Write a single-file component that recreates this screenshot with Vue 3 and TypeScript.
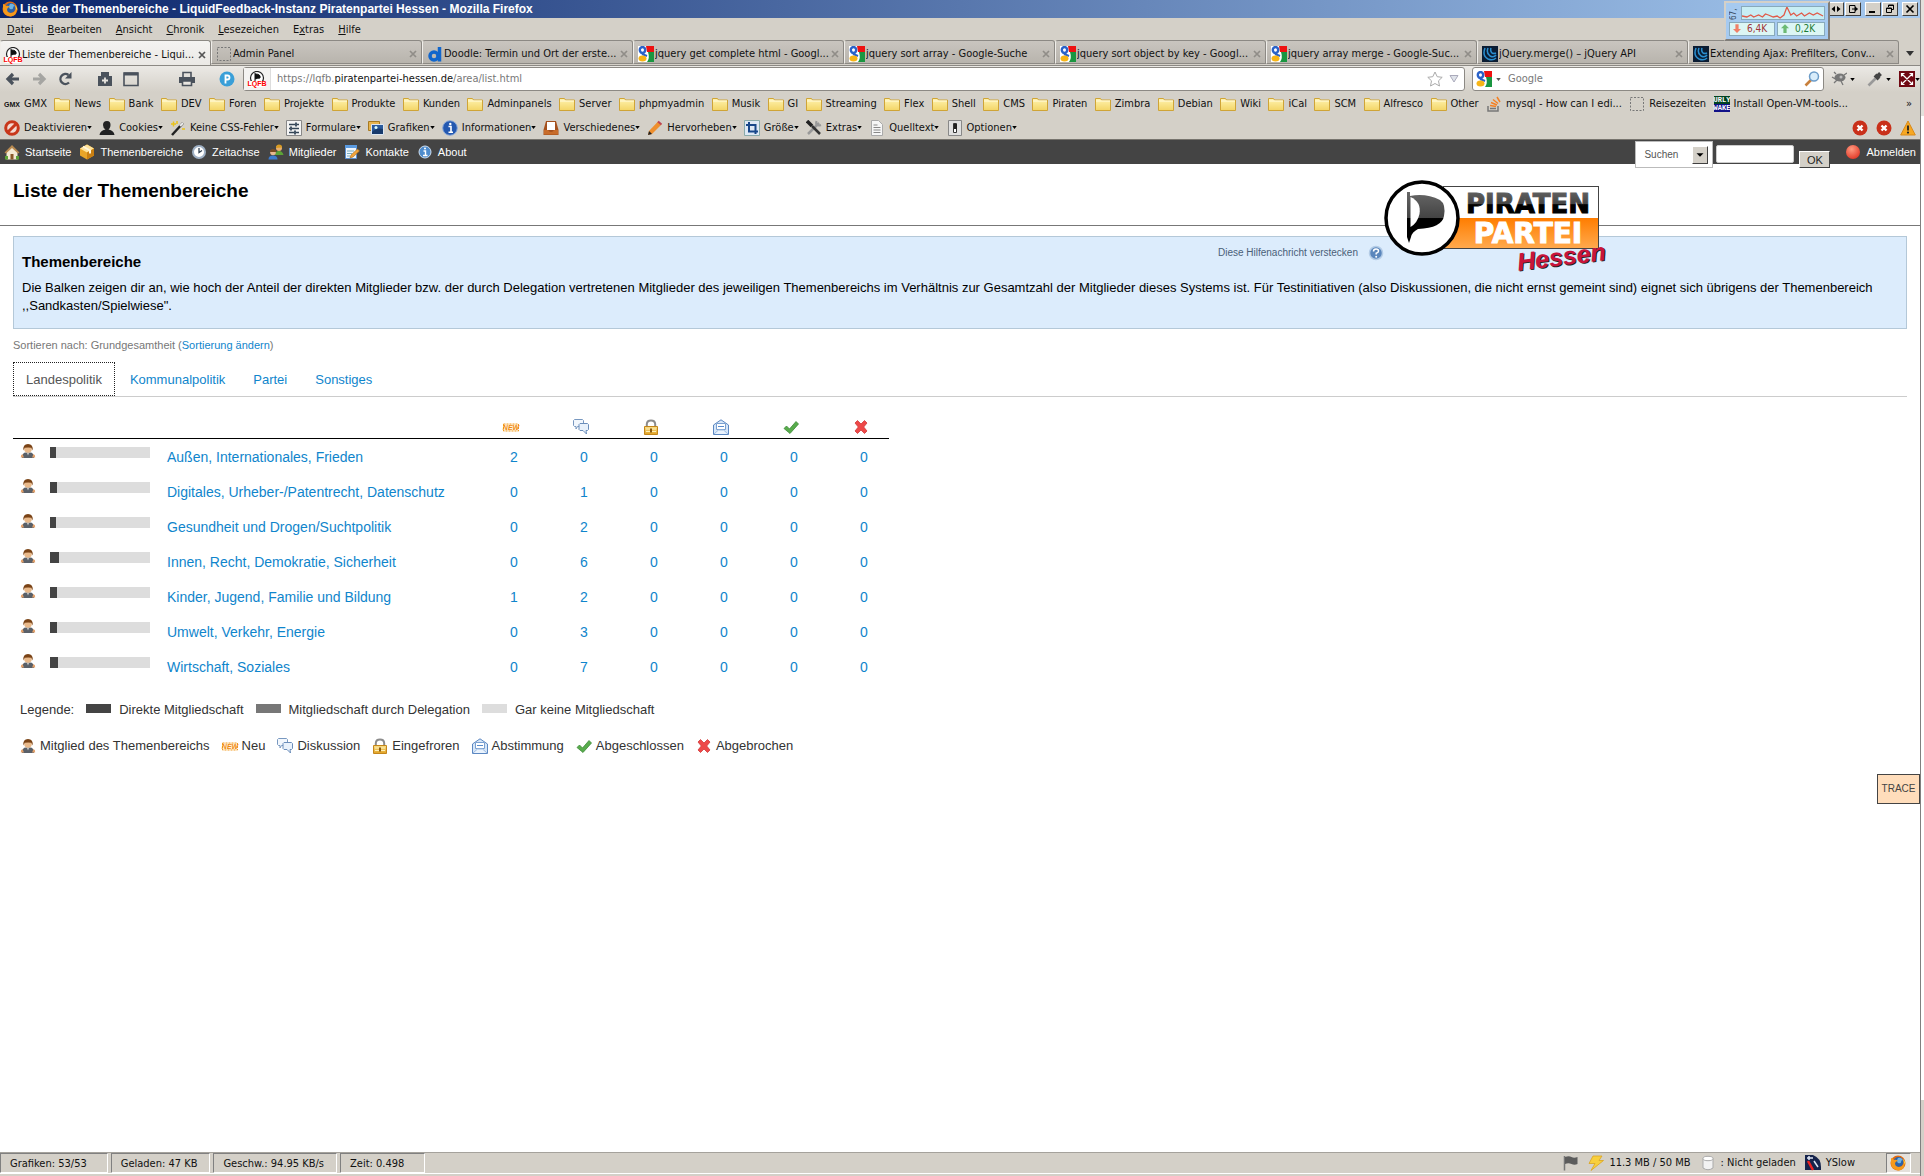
<script setup lang="ts">
import { h, ref } from 'vue'

interface Item { label: string; icon: string }
interface Area { name: string; direct: number; counts: number[] }
interface Caption { text: string; y: number; fill: string; style?: string; family?: string }

/* Favicons and badges that carry lettering on top of their symbol. */
const captions: Record<string, Caption[]> = {
  lqfb: [{ text: 'LQFB', y: 15, fill: '#f00' }],
  gmx: [{ text: 'GMX', y: 11, fill: '#111' }],
  new: [{ text: 'NEW', y: 11, fill: '#f08a10', style: 'italic' }],
  wake: [
    { text: 'URLY', y: 6, fill: '#fff', family: 'Liberation Mono' },
    { text: 'WAKE', y: 14, fill: '#fff', family: 'Liberation Mono' },
  ],
}

const Icon = (props: { name: string }) =>
  h('svg', { class: 'icon', viewBox: '0 0 16 16' }, [
    h('use', { href: '#i-' + props.name }),
    ...(captions[props.name] ?? []).map((c) =>
      h('text', {
        x: 8, y: c.y, fill: c.fill, 'font-size': 7, 'font-weight': 'bold', 'font-style': c.style,
        'font-family': c.family ?? 'Liberation Sans', 'text-anchor': 'middle',
      }, c.text)),
  ])
Icon.props = ['name']

const menu: [string, string, string][] = [
  ['', 'D', 'atei'], ['', 'B', 'earbeiten'], ['', 'A', 'nsicht'], ['', 'C', 'hronik'],
  ['', 'L', 'esezeichen'], ['E', 'x', 'tras'], ['', 'H', 'ilfe'],
]

const tabs: Item[] = [
  { label: 'Liste der Themenbereiche - Liqui...', icon: 'lqfb' },
  { label: 'Admin Panel', icon: 'blank' },
  { label: 'Doodle: Termin und Ort der erste...', icon: 'doodle' },
  { label: 'jquery get complete html - Googl...', icon: 'google' },
  { label: 'jquery sort array - Google-Suche', icon: 'google' },
  { label: 'jquery sort object by key - Googl...', icon: 'google' },
  { label: 'jquery array merge - Google-Suc...', icon: 'google' },
  { label: 'jQuery.merge() – jQuery API', icon: 'jquery' },
  { label: 'Extending Ajax: Prefilters, Conv...', icon: 'jquery' },
]

const folders = ['News', 'Bank', 'DEV', 'Foren', 'Projekte', 'Produkte', 'Kunden', 'Adminpanels', 'Server',
  'phpmyadmin', 'Musik', 'GI', 'Streaming', 'Flex', 'Shell', 'CMS', 'Piraten', 'Zimbra', 'Debian', 'Wiki',
  'iCal', 'SCM', 'Alfresco', 'Other']

const bookmarks: Item[] = [
  { label: 'GMX', icon: 'gmx' },
  ...folders.map((label) => ({ label, icon: 'folder' })),
  { label: 'mysql - How can I edi...', icon: 'stack' },
  { label: 'Reisezeiten', icon: 'blank' },
  { label: 'Install Open-VM-tools...', icon: 'wake' },
]

const devTools: Item[] = [
  { label: 'Deaktivieren', icon: 'forbid' },
  { label: 'Cookies', icon: 'person' },
  { label: 'Keine CSS-Fehler', icon: 'wand' },
  { label: 'Formulare', icon: 'form' },
  { label: 'Grafiken', icon: 'images' },
  { label: 'Informationen', icon: 'info' },
  { label: 'Verschiedenes', icon: 'tray' },
  { label: 'Hervorheben', icon: 'pencil' },
  { label: 'Größe', icon: 'crop' },
  { label: 'Extras', icon: 'tools' },
  { label: 'Quelltext', icon: 'doc' },
  { label: 'Optionen', icon: 'switch' },
]

const siteNav: Item[] = [
  { label: 'Startseite', icon: 'house' },
  { label: 'Themenbereiche', icon: 'box' },
  { label: 'Zeitachse', icon: 'clock' },
  { label: 'Mitglieder', icon: 'group' },
  { label: 'Kontakte', icon: 'note' },
  { label: 'About', icon: 'about' },
]

const sections = ['Landespolitik', 'Kommunalpolitik', 'Partei', 'Sonstiges']
const activeSection = ref('Landespolitik')

const states: Item[] = [
  { label: 'Neu', icon: 'new' },
  { label: 'Diskussion', icon: 'talk' },
  { label: 'Eingefroren', icon: 'lock' },
  { label: 'Abstimmung', icon: 'mail' },
  { label: 'Abgeschlossen', icon: 'tick' },
  { label: 'Abgebrochen', icon: 'cross' },
]

const areas: Area[] = [
  { name: 'Außen, Internationales, Frieden', direct: 6, counts: [2, 0, 0, 0, 0, 0] },
  { name: 'Digitales, Urheber-/Patentrecht, Datenschutz', direct: 7, counts: [0, 1, 0, 0, 0, 0] },
  { name: 'Gesundheit und Drogen/Suchtpolitik', direct: 6, counts: [0, 2, 0, 0, 0, 0] },
  { name: 'Innen, Recht, Demokratie, Sicherheit', direct: 9, counts: [0, 6, 0, 0, 0, 0] },
  { name: 'Kinder, Jugend, Familie und Bildung', direct: 7, counts: [1, 2, 0, 0, 0, 0] },
  { name: 'Umwelt, Verkehr, Energie', direct: 7, counts: [0, 3, 0, 0, 0, 0] },
  { name: 'Wirtschaft, Soziales', direct: 8, counts: [0, 7, 0, 0, 0, 0] },
]

const status = ['Grafiken: 53/53', 'Geladen: 47 KB', 'Geschw.: 94.95 KB/s', 'Zeit: 0.498']
const windowButtons: Item[] = [
  { label: 'Verschieben', icon: 'w-move' },
  { label: 'Senden', icon: 'w-send' },
  { label: 'Minimieren', icon: 'w-min' },
  { label: 'Wiederherstellen', icon: 'w-restore' },
  { label: 'Schließen', icon: 'w-close' },
]
const webQuery = ref('')
const siteQuery = ref('')
</script>

<template>
  <svg class="defs" aria-hidden="true">
    <defs>
      <linearGradient id="g-folder" x1="0" y1="0" x2="0" y2="1"><stop offset="0" stop-color="#fff3b0" /><stop offset="1" stop-color="#f3d566" /></linearGradient>
      <linearGradient id="g-lock" x1="0" y1="0" x2="0" y2="1"><stop offset="0" stop-color="#fbe08a" /><stop offset="1" stop-color="#e0a020" /></linearGradient>
      <radialGradient id="g-red" cx=".4" cy=".3" r=".8"><stop offset="0" stop-color="#ff9a80" /><stop offset="1" stop-color="#e03020" /></radialGradient>
      <linearGradient id="g-black" x1="0" y1="0" x2="0" y2="1"><stop offset="0" stop-color="#666" /><stop offset=".5" stop-color="#444" /><stop offset=".52" stop-color="#000" /><stop offset="1" stop-color="#000" /></linearGradient>
      <linearGradient id="g-orange" x1="0" y1="0" x2="0" y2="1"><stop offset="0" stop-color="#ff7d00" /><stop offset="1" stop-color="#ffa94d" /></linearGradient>
    </defs>
    <symbol id="i-firefox" viewBox="0 0 16 16"><circle cx="8" cy="8" r="7.5" fill="#e06a10" /><circle cx="8.5" cy="7" r="5" fill="#2c62a8" /><path d="M8 3q3-1 5 2-2 0-2 2t-3 1q-2-2 0-5" fill="#6fb4e4" /><path d="M1 3q2 0 3 2 2-1 4 1-2 0-3 2 0 4 4 4 4 0 5-5 2 7-5 8.500Q1 15 1 8q0-3 0-5" fill="#f59a1c" /><path d="M13 4q3 3 2 6 0-1-1-2" fill="#ffd23c" /></symbol>
    <symbol id="i-lqfb" viewBox="0 0 16 16"><circle cx="8" cy="7" r="6.500" fill="#fff" stroke="#222" stroke-width="1.200" /><path d="M6 2v8M6 3q6 0 5 4-2 0-5 1" fill="#111" stroke="#111" /><path d="M0 10h16v6H0z" fill="#fff" /></symbol>
    <symbol id="i-blank" viewBox="0 0 16 16"><rect x="1.500" y="1.500" width="13" height="13" fill="none" stroke="#777" stroke-dasharray="2 1.500" /></symbol>
    <symbol id="i-doodle" viewBox="0 0 16 16"><circle cx="7" cy="10" r="4" fill="none" stroke="#1166cc" stroke-width="3.500" /><path d="M12.500 1v14.500" stroke="#1166cc" stroke-width="3.500" /></symbol>
    <symbol id="i-google" viewBox="0 0 16 16"><path fill="#fff" d="M0 0h16v16H0z" /><path fill="#e11" d="M8 0h8v6H9z" /><path fill="#1a9641" d="M10 6h6v10H9q3-4 1-10" /><ellipse cx="4.500" cy="4" rx="2.700" ry="3" fill="none" stroke="#2a62c8" stroke-width="2.400" /><path d="M4 8l5 2" stroke="#2a62c8" stroke-width="2" /><ellipse cx="4.500" cy="12.500" rx="4" ry="3" fill="#f7b516" /></symbol>
    <symbol id="i-jquery" viewBox="0 0 16 16"><path fill="#0a1c33" d="M0 0h16v16H0z" /><path d="M3 2q-3 8 3 11 5 2 8-1M6 2q-2 5 2 8 4 2 6-1M9 2q-1 3 1 5 2 1 4 0" fill="none" stroke="#2b8fd0" stroke-width="1.500" /></symbol>
    <symbol id="i-folder" viewBox="0 0 16 16"><path d="M.5 14.500v-12h5l1 1.500h9v10.500z" fill="url(#g-folder)" stroke="#cfa437" /><path d="M1 5h14" stroke="#fffbe0" /></symbol>
    <symbol id="i-stack" viewBox="0 0 16 16"><path d="M2 10v5h10v-5" fill="none" stroke="#777" stroke-width="1.500" /><path d="M4 12.500h6" stroke="#777" stroke-width="1.500" /><path d="M4 9.500l6 1M5 6.500l6 2.500M7 3.500l5 4M11 1l3 5" stroke="#f48024" stroke-width="1.500" /></symbol>
    <symbol id="i-wake" viewBox="0 0 16 16"><path fill="#042" d="M0 0h16v8H0z" /><path fill="#118" d="M0 8h16v8H0z" /></symbol>
    <symbol id="i-forbid" viewBox="0 0 16 16"><circle cx="8" cy="8" r="6.300" fill="#f3d9d2" stroke="#c8371b" stroke-width="3" /><path d="M12.500 3.500l-9 9" stroke="#c8371b" stroke-width="3" /></symbol>
    <symbol id="i-person" viewBox="0 0 16 16"><path d="M8 1c5 0 4 7 1.500 8.500Q15 10.500 15.500 15H.5Q1 10.500 6.500 9.500 4 8 4 5q0-4 4-4" fill="#222" /></symbol>
    <symbol id="i-wand" viewBox="0 0 16 16"><path d="M2 15L13 3" stroke="#222" stroke-width="2.500" /><path d="M10 6l3-3" stroke="#eee" stroke-width="2" /><path d="M1 4h5M3.500 1.500v5M7 1v3M12 9h3" stroke="#e9c21b" stroke-width="1.500" /></symbol>
    <symbol id="i-form" viewBox="0 0 16 16"><path fill="#f4f4f4" stroke="#888" d="M.5.500h15v15H.5z" /><path d="M3 4.500h10M3 8.500h10M3 12.500h10" stroke="#345" stroke-width="1.500" /><path d="M9 2.500h2v4H9zM4 6.500h2v4H4zM8 10.500h2v4H8z" fill="#456" /></symbol>
    <symbol id="i-images" viewBox="0 0 16 16"><path fill="#e6b450" stroke="#a87a20" d="M.5 1.500h11v9H.5z" /><path fill="#2a5a9c" stroke="#dce6f0" d="M3.500 4.500h12v10h-12z" /><path d="M4 12q5-5 11-3v5H4z" fill="#173a6c" /><circle cx="8" cy="7.500" r="1.500" fill="#dff" /></symbol>
    <symbol id="i-info" viewBox="0 0 16 16"><circle cx="8" cy="8" r="7.300" fill="#2458b0" stroke="#8aa8d8" /><path d="M6.500 6.500H9V12M6.500 12.200h4.500" stroke="#fff" stroke-width="1.600" fill="none" /><circle cx="8.300" cy="4" r="1.200" fill="#fff" /></symbol>
    <symbol id="i-about" viewBox="0 0 16 16"><circle cx="8" cy="8" r="6" fill="#4f8ccc" stroke="#cfe0f2" /><path d="M6.500 7H8.500v4M6 11.500h4.500" stroke="#fff" stroke-width="1.400" fill="none" /><circle cx="8" cy="4.500" r="1" fill="#fff" /></symbol>
    <symbol id="i-tray" viewBox="0 0 16 16"><path d="M3 1h10l2.500 9v5H.5v-5z" fill="#a5501c" /><path d="M4 2h8v8H4z" fill="#fff" /><path d="M1 10h4q1 2 3 2t3-2h4v4.500H1z" fill="#c86c2a" /></symbol>
    <symbol id="i-pencil" viewBox="0 0 16 16"><path d="M1 15l1-4L11 1.500l3.500 3L5 14z" fill="#ee8f2e" /><path d="M1 15l1-4 3 3z" fill="#222" /><path d="M11 1.500l3.500 3" stroke="#b45" stroke-width="2" /></symbol>
    <symbol id="i-crop" viewBox="0 0 16 16"><path fill="#dde8f4" stroke="#8aa" d="M.5.500h15v15H.5z" /><path d="M5 2v9.500h9M2 5h9.500v9" fill="none" stroke="#17478a" stroke-width="2" /></symbol>
    <symbol id="i-tools" viewBox="0 0 16 16"><path d="M2 14L13 3" stroke="#999" stroke-width="2.500" /><path d="M10.500 1q-1 3 .5 4t4 0" fill="none" stroke="#999" stroke-width="2" /><path d="M1 1l5 5" stroke="#222" stroke-width="3.500" /><path d="M6 6l8 8" stroke="#333" stroke-width="2.500" /></symbol>
    <symbol id="i-doc" viewBox="0 0 16 16"><path d="M2.500.500h7l4 4v11h-11z" fill="#f6f6f6" stroke="#aaa" /><path d="M4.500 5h4M4.500 7.500h7M4.500 10h7M4.500 12.500h7" stroke="#888" /></symbol>
    <symbol id="i-switch" viewBox="0 0 16 16"><path fill="#e0e0e0" stroke="#888" d="M1.500.500h13v15h-13z" /><path fill="#fff" stroke="#333" d="M6.500 3.500h3v9h-3z" /><path fill="#222" d="M7 4h3v5H7z" /></symbol>
    <symbol id="i-house" viewBox="0 0 16 16"><path d="M2.500 8v7.500h11V8L8 3z" fill="#f4ead2" /><path d="M8 1L.500 8.500l1.500 1L8 4l6 5.500 1.500-1z" fill="#b98a50" /><path d="M6.500 10h3v5.500h-3z" fill="#8a5a28" /><path d="M1 12h3v3.500H1zM12 12h3v3.500h-3z" fill="#5ca336" /></symbol>
    <symbol id="i-box" viewBox="0 0 16 16"><path d="M8 .5l7 4v7l-7 4-7-4v-7z" fill="#e8a528" /><path d="M8 .5l7 4-7 4-7-4z" fill="#ffe39a" /><path d="M8 8.500v7l7-4v-7z" fill="#c97f12" /><path d="M4 2.500l7 4v3" fill="none" stroke="#fff6dc" stroke-width="2" /></symbol>
    <symbol id="i-clock" viewBox="0 0 16 16"><circle cx="8" cy="8" r="6" fill="#fff" stroke="#9fb0c4" stroke-width="2" /><path d="M8 4v4.500l3-2" fill="none" stroke="#345" stroke-width="1.300" /></symbol>
    <symbol id="i-group" viewBox="0 0 16 16"><circle cx="11" cy="4" r="3" fill="#e8b070" /><path d="M8 4q0-3.500 3-3.500t3 3" fill="#d89a20" /><path d="M6.500 11q1-4 4.500-4t4.500 4z" fill="#5ca336" /><circle cx="5" cy="8.500" r="2.800" fill="#e8b890" /><path d="M2 8q0-3 3-3t3 3" fill="#7a4a20" /><path d="M.5 15.500Q.500 11.500 5 11.500t4.500 4z" fill="#3c7cd0" /></symbol>
    <symbol id="i-note" viewBox="0 0 16 16"><path d="M1.500 1.500h11v13h-11z" fill="#eef5fd" stroke="#5a8fd0" /><path d="M1 1h12v3H1z" fill="#5a9ae0" /><path d="M3 7h7M3 9.500h5M3 12h3" stroke="#7ab" /><path d="M6 14l1-3 6.500-6 2 2L9 13z" fill="#f0a43c" stroke="#a66a18" stroke-width=".6" /></symbol>
    <symbol id="i-help" viewBox="0 0 16 16"><circle cx="8" cy="8" r="6.500" fill="#5a86bc" stroke="#b4cce6" stroke-width="1.500" /><path d="M5.500 6.500q0-2.500 2.500-2.500t2.500 2q0 1.500-2.300 2.300v1.200" fill="none" stroke="#fff" stroke-width="1.500" /><circle cx="8.200" cy="11.700" r="1" fill="#fff" /></symbol>
    <symbol id="i-stop" viewBox="0 0 16 16"><circle cx="8" cy="8" r="7" fill="url(#g-red)" /></symbol>
    <symbol id="i-member" viewBox="0 0 16 16"><path d="M2 15q0-5.500 4-5.500h4q4 0 4 5.500z" fill="#5a6068" /><path d="M.8 14.500q-.3-3 1.700-3.500L4 14.500zM15.200 14.500q.3-3-1.700-3.500L12 14.500z" fill="#e2a06a" /><circle cx="8" cy="6" r="3.800" fill="#e9b98a" /><path d="M3.500 7.500Q2.500 1 8 1t4.500 6.500l-1.200-2.700q-3-.8-6.600 0z" fill="#7a4316" /><path d="M7 10h2l-1 2.500z" fill="#ccc" /></symbol>
    <symbol id="i-new" viewBox="0 0 16 16"><path d="M.5 5h15v7H.5z" fill="#fff3dc" stroke="#f39a1f" stroke-width="1" stroke-dasharray="2 1" /></symbol>
    <symbol id="i-talk" viewBox="0 0 16 16"><path d="M1.500.500h8l1 1v5l-1 1H4.500L3 10V7.500H1.500l-1-1v-5z" fill="#f2f7fd" stroke="#7898c0" /><path d="M7 4.500h7.500l1 1v5l-1 1H13l.5 3.500-3.500-3.500H7l-1-1v-5z" fill="#e8f1fb" stroke="#6a8dba" /></symbol>
    <symbol id="i-lock" viewBox="0 0 16 16"><path d="M3.800 8V5Q4 1.500 8 1.500T12.200 5v3" fill="none" stroke="#8c8c8c" stroke-width="2" /><path d="M1.500 7.500h13v8h-13z" fill="url(#g-lock)" stroke="#c4861a" /><path d="M3 10h10M3 12.500h10" stroke="#fdf0b8" /><path d="M7 9.500h2v4H7z" fill="#8a5a10" /></symbol>
    <symbol id="i-mail" viewBox="0 0 16 16"><path d="M.5 6L8 .8 15.500 6v9.500H.500z" fill="#d6e6f8" stroke="#5c88c2" /><path d="M3.500 4.500h9v6h-9z" fill="#fff" stroke="#7aa0d0" /><path d="M5 7.500h6" stroke="#5a8ccc" /><path d="M1 15l4.500-4h5l4.500 4" fill="#eaf3fd" stroke="#9dbbe0" /></symbol>
    <symbol id="i-tick" viewBox="0 0 16 16"><path d="M1 9.500L3.500 7l3 3L13 2.500 15.500 5 7 14.500z" fill="#58ac4c" stroke="#3d8a38" stroke-width=".8" /></symbol>
    <symbol id="i-cross" viewBox="0 0 16 16"><path d="M2 4l2.500-2.500L8 5l3.500-3.500L14 4l-3.300 4L14 12l-2.500 2.500L8 11l-3.500 3.500L2 12l3.300-4z" fill="#ee4848" stroke="#d03a3a" stroke-width=".8" /></symbol>
    <symbol id="i-back" viewBox="0 0 16 16"><path d="M8 3L3 8l5 5M3 8h11" fill="none" stroke="currentColor" stroke-width="3.200" /></symbol>
    <symbol id="i-forward" viewBox="0 0 16 16"><path d="M8 3l5 5-5 5M13 8H2" fill="none" stroke="currentColor" stroke-width="3.200" /></symbol>
    <symbol id="i-reload" viewBox="0 0 16 16"><path d="M12 11.500A5 5 0 1 1 11.500 4" fill="none" stroke="currentColor" stroke-width="2.400" /><path d="M14.500 1v6.500H8z" fill="currentColor" /></symbol>
    <symbol id="i-newtab" viewBox="0 0 16 16"><path d="M4 5V1h8v4h3v10H1V5z" fill="currentColor" /><path d="M8 6.500v6M5 9.500h6" stroke="#e8e5e0" stroke-width="1.800" /></symbol>
    <symbol id="i-newwin" viewBox="0 0 16 16"><path d="M1 2h14v12.500H1z" fill="none" stroke="currentColor" stroke-width="1.600" /><path d="M1 3h14" stroke="currentColor" stroke-width="3" /></symbol>
    <symbol id="i-print" viewBox="0 0 16 16"><path d="M4 6V1.500h8V6" fill="none" stroke="currentColor" stroke-width="1.600" /><path d="M0 6h16v6H0z" fill="currentColor" /><path d="M3.500 10h9v4.500h-9z" fill="#e8e5e0" stroke="currentColor" stroke-width="1.600" /></symbol>
    <symbol id="i-p" viewBox="0 0 16 16"><circle cx="8" cy="8" r="7.500" fill="#3a9fd8" /><path d="M6.500 12.500v-8h2q2 0 2 2t-2 2h-2" fill="none" stroke="#fff" stroke-width="1.800" /></symbol>
    <symbol id="i-star" viewBox="0 0 16 16"><path d="M8 1l2.200 4.700 5 .6-3.700 3.500 1 5.200L8 12.500 3.500 15l1-5.200L.800 6.300l5-.6z" fill="#fff" stroke="#aaa" /></symbol>
    <symbol id="i-loupe" viewBox="0 0 16 16"><path d="M1.500 14.500L7 9" stroke="#c8803c" stroke-width="2.600" /><circle cx="10" cy="5.500" r="4.500" fill="#d8ecfa" stroke="#6c9cc8" stroke-width="1.500" /></symbol>
    <symbol id="i-bug" viewBox="0 0 16 16"><ellipse cx="9" cy="6.500" rx="5.500" ry="4" fill="#777" /><path d="M1 6l5 3M3 12l4-4M10 10l2 4M5 3L3 1M13 4l3-2" stroke="#777" stroke-width="1.300" /><circle cx="10" cy="6" r="1.500" fill="#bbb" /></symbol>
    <symbol id="i-dropper" viewBox="0 0 16 16"><path d="M1.500 14.500l7-7" stroke="#999" stroke-width="2.600" /><path d="M8 4l4 4M9.500 6.500l4-4" stroke="#444" stroke-width="4" /></symbol>
    <symbol id="i-expand" viewBox="0 0 16 16"><path fill="#700812" d="M0 0h16v16H0z" /><path d="M2.500 2.500l11 11M13.500 2.500l-11 11M2.500 5.500v-3h3M10.500 2.500h3v3M2.500 10.500v3h3M10.500 13.500h3v-3" fill="none" stroke="#fff" stroke-width="1.200" /></symbol>
    <symbol id="i-error" viewBox="0 0 16 16"><circle cx="8" cy="8" r="7.500" fill="#c9301a" /><path d="M5.500 5.500l5 5M10.500 5.500l-5 5" stroke="#fff" stroke-width="2.400" /></symbol>
    <symbol id="i-warn" viewBox="0 0 16 16"><path d="M8 1l7.300 14H.700z" fill="#f7a823" stroke="#d98a1a" /><path d="M8 5.500v5" stroke="#222" stroke-width="1.800" /><circle cx="8" cy="12.600" r="1.100" fill="#222" /></symbol>
    <symbol id="i-flag" viewBox="0 0 16 16"><path d="M1.500 1v14.500" stroke="#777" stroke-width="1.500" /><path d="M2 2q4-1.500 6.500 0t6 0v7q-3 1.500-6 0T2 9z" fill="#5c5c5c" /></symbol>
    <symbol id="i-bolt" viewBox="0 0 16 16"><path d="M5 1h9l-3 4.500h4.500L3 15.500l4-7H1z" fill="#f8cf3c" stroke="#dba520" stroke-width=".8" /></symbol>
    <symbol id="i-db" viewBox="0 0 16 16"><path d="M3 3.500v9.500q5 3.500 10 0V3.500" fill="#f2f2f2" stroke="#aaa" /><ellipse cx="8" cy="3.500" rx="5" ry="2.200" fill="#fff" stroke="#aaa" /></symbol>
    <symbol id="i-yslow" viewBox="0 0 16 16"><path d="M0 0h8q8 3 8 12v3H0z" fill="#16244c" /><path d="M2 3h6M4 1v4M9 6l4 6" stroke="#dfe6f5" stroke-width="1.500" /><path d="M3 6l5 9" stroke="#e22" stroke-width="2.500" /></symbol>
    <symbol id="i-w-move" viewBox="0 0 12 10"><path d="M5 2v6L1.500 5zM7 2v6l3.500-3z" /></symbol>
    <symbol id="i-w-send" viewBox="0 0 12 10"><path d="M8 3V1.500H2.500v7H8V7" fill="none" stroke="#000" /><path d="M5 5h5M8 3l2.500 2L8 7z" stroke="#000" /></symbol>
    <symbol id="i-w-min" viewBox="0 0 12 10"><path d="M2 7h6v2H2z" /></symbol>
    <symbol id="i-w-restore" viewBox="0 0 12 10"><path d="M4.500 3V1h5v4.500H8M2.500 4h5v4.500h-5zM2.500 4.500h5M4.500 1.500h5" fill="none" stroke="#000" /></symbol>
    <symbol id="i-w-close" viewBox="0 0 12 10"><path d="M2.500 1.500l7 7M9.500 1.500l-7 7" stroke="#000" stroke-width="1.700" /></symbol>
  </svg>

  <div class="desktop">
    <div class="window">
      <header class="titlebar">
        <Icon name="firefox" />
        <span class="title">Liste der Themenbereiche - LiquidFeedback-Instanz Piratenpartei Hessen - Mozilla Firefox</span>
        <div class="win-buttons">
          <button v-for="b in windowButtons" :key="b.icon" type="button" class="win-button" :class="b.icon" :aria-label="b.label">
            <svg><use :href="'#i-' + b.icon" /></svg>
          </button>
        </div>
      </header>

      <div class="netmeter">
        <span class="net-peak">67,</span>
        <svg class="net-graph" viewBox="0 0 84 12" preserveAspectRatio="none"><path d="M0 9l5 1 4-2 3 2 5-2 4 2 3-3 3 1 5 2 4-1 3 2 4-3 3-8 4 8 3-2 3 3 5-3 3 3 5-3 4 2 4-2 6 3" fill="none" stroke="#e05a48" stroke-width="1.300" /></svg>
        <span class="net-value down"><svg viewBox="0 0 10 12"><path d="M3 0h4v6h3l-5 5-5-5h3z" fill="#f08068" /></svg>6,4K</span>
        <span class="net-value up"><svg viewBox="0 0 10 12"><path d="M3 11h4V5h3L5 0 0 5h3z" fill="#6cba74" /></svg>0,2K</span>
      </div>

      <nav class="menubar">
        <button v-for="m in menu" :key="m[2]" type="button" class="plain">{{ m[0] }}<u>{{ m[1] }}</u>{{ m[2] }}</button>
      </nav>

      <div class="tabstrip">
        <div v-for="(t, i) in tabs" :key="t.label" class="tab" :class="{ current: i === 0 }">
          <Icon :name="t.icon" />
          <span class="tab-label">{{ t.label }}</span>
          <button type="button" class="plain tab-close" aria-label="Tab schließen">
            <svg viewBox="0 0 8 8"><path d="M1 1l6 6M7 1L1 7" stroke="currentColor" stroke-width="1.700" /></svg>
          </button>
        </div>
        <button type="button" class="plain tab-list" aria-label="Alle Tabs auflisten"><svg viewBox="0 0 8 5"><path d="M0 0h8L4 5z" fill="#333" /></svg></button>
      </div>

      <div class="navbar">
        <div class="nav-buttons">
          <button type="button" class="plain" aria-label="Zurück"><Icon name="back" /></button>
          <button type="button" class="plain faded" aria-label="Vor"><Icon name="forward" /></button>
          <button type="button" class="plain" aria-label="Neu laden"><Icon name="reload" /></button>
          <button type="button" class="plain spaced" aria-label="Neuer Tab"><Icon name="newtab" /></button>
          <button type="button" class="plain" aria-label="Neues Fenster"><Icon name="newwin" /></button>
          <button type="button" class="plain far" aria-label="Drucken"><Icon name="print" /></button>
          <button type="button" class="plain spaced" aria-label="Piraten"><Icon name="p" /></button>
        </div>
        <div class="urlbar">
          <span class="site"><Icon name="lqfb" /></span>
          <a class="url" href="#">https://lqfb.<b>piratenpartei-hessen.de</b>/area/list.html</a>
          <Icon name="star" />
          <svg class="tri" viewBox="0 0 10 8"><path d="M1 .5h8L5 7z" fill="#dfe3ea" stroke="#aab" /></svg>
        </div>
        <label class="searchbar">
          <Icon name="google" />
          <svg class="caret" viewBox="0 0 6 4"><path d="M0 0h6L3 4z" fill="#555" /></svg>
          <input v-model="webQuery" type="text" placeholder="Google" aria-label="Google-Suche">
          <Icon name="loupe" />
        </label>
        <div class="addons">
          <button v-for="a in ['bug', 'dropper', 'expand']" :key="a" type="button" class="plain addon" :aria-label="a">
            <Icon :name="a" /><svg class="caret" viewBox="0 0 6 4"><path d="M0 0h6L3 4z" /></svg>
          </button>
        </div>
      </div>

      <nav class="bookmarks">
        <div class="bookmark-list">
          <a v-for="b in bookmarks" :key="b.label" href="#" class="tool"><Icon :name="b.icon" />{{ b.label }}</a>
        </div>
        <button type="button" class="plain more">»</button>
      </nav>

      <div class="devbar">
        <div class="dev-list">
          <button v-for="d in devTools" :key="d.label" type="button" class="plain tool"><Icon :name="d.icon" /><span>{{ d.label }}<svg class="caret" viewBox="0 0 6 4"><path d="M0 0h6L3 4z" /></svg></span></button>
        </div>
        <div class="dev-state">
          <Icon name="error" />
          <Icon name="error" />
          <Icon name="warn" />
        </div>
      </div>

      <div class="page">
        <div class="sitebar">
          <nav class="site-nav">
            <a v-for="n in siteNav" :key="n.label" href="#"><Icon :name="n.icon" />{{ n.label }}</a>
          </nav>
          <form class="site-search" @submit.prevent>
            <span class="select-box">
              <select aria-label="Suchbereich"><option>Suchen</option></select>
              <svg class="select-arrow" viewBox="0 0 16 18"><path d="M4 7h8l-4 4z" /></svg>
            </span>
            <input v-model="siteQuery" type="text" aria-label="Suchbegriff">
            <button type="submit" class="ok">OK</button>
          </form>
          <a href="#" class="logout"><Icon name="stop" />Abmelden</a>
        </div>

        <h1>Liste der Themenbereiche</h1>

        <svg class="logo" viewBox="0 0 228 96" role="img" aria-label="Piratenpartei Hessen">
          <rect x="59.500" y="8.500" width="155" height="62" fill="#fff" stroke="#444" />
          <rect x="60" y="40" width="154" height="30" fill="url(#g-orange)" />
          <circle cx="38" cy="40" r="36" fill="#fff" stroke="#000" stroke-width="3.500" />
          <path d="M23 14h3v4q16-3 30 4 6 4 4 16-2 12-26 13-6 3-7 8l-2 6-2-6z" fill="url(#g-black)" />
          <path d="M26.500 19q11 5 9 17-2 9-9 13z" fill="#fff" />
          <text x="144" y="35" class="logo-text" fill="url(#g-black)" stroke="url(#g-black)" text-anchor="middle">PIRATEN</text>
          <text x="144" y="65" class="logo-text wide" fill="#fff" stroke="#fff" text-anchor="middle">PARTEI</text>
          <g transform="rotate(-7 180 80)" class="logo-state"><text x="134" y="88" fill="#222">Hessen</text><text x="133" y="87" fill="#c8143c">Hessen</text></g>
        </svg>

        <main>
          <section class="help">
            <a href="#" class="hide-help">Diese Hilfenachricht verstecken<Icon name="help" /></a>
            <h2>Themenbereiche</h2>
            <p>Die Balken zeigen dir an, wie hoch der Anteil der direkten Mitglieder bzw. der durch Delegation vertretenen Mitglieder des jeweiligen Themenbereichs im Verhältnis zur Gesamtzahl der Mitglieder dieses Systems ist. Für Testinitiativen (also Diskussionen, die nicht ernst gemeint sind) eignet sich übrigens der Themenbereich ,,Sandkasten/Spielwiese".</p>
          </section>

          <p class="sorting">Sortieren nach: Grundgesamtheit (<a href="#">Sortierung ändern</a>)</p>

          <nav class="sections">
            <a v-for="s in sections" :key="s" href="#" :class="{ active: s === activeSection }" @click.prevent="activeSection = s">{{ s }}</a>
          </nav>

          <table class="areas">
            <thead>
              <tr>
                <th class="c-member"></th>
                <th class="c-bar"></th>
                <th></th>
                <th v-for="s in states" :key="s.icon" class="c-num" :aria-label="s.label"><Icon :name="s.icon" /></th>
              </tr>
            </thead>
            <tbody>
              <tr v-for="a in areas" :key="a.name">
                <td class="c-member"><Icon name="member" /></td>
                <td class="c-bar"><div class="bar"><div class="bar-direct" :style="{ width: a.direct + '%' }"></div></div></td>
                <td><a href="#">{{ a.name }}</a></td>
                <td v-for="(c, i) in a.counts" :key="i" class="c-num"><a href="#">{{ c }}</a></td>
              </tr>
            </tbody>
          </table>

          <div class="legend bars">
            <span>Legende:</span>
            <span><i class="swatch direct"></i>Direkte Mitgliedschaft</span>
            <span><i class="swatch delegated"></i>Mitgliedschaft durch Delegation</span>
            <span><i class="swatch none"></i>Gar keine Mitgliedschaft</span>
          </div>
          <div class="legend">
            <span><Icon name="member" />Mitglied des Themenbereichs</span>
            <span v-for="s in states" :key="s.icon"><Icon :name="s.icon" />{{ s.label }}</span>
          </div>
        </main>

        <button type="button" class="trace">TRACE</button>
      </div>

      <footer class="statusbar">
        <span v-for="s in status" :key="s" class="panel">{{ s }}</span>
        <div class="status-right">
          <Icon name="flag" />
          <span><Icon name="bolt" />11.3 MB / 50 MB</span>
          <span><Icon name="db" />: Nicht geladen</span>
          <span><Icon name="yslow" />YSlow</span>
        </div>
        <button type="button" class="fox" aria-label="Firefox"><Icon name="firefox" /></button>
      </footer>
    </div>
    <div class="edge"><div class="edge-top"></div><div class="edge-middle"></div><div class="edge-bottom"></div></div>
  </div>
</template>

<style>
body { margin: 0; background: #fff; }
</style>

<style scoped>
* { box-sizing: border-box; }
.defs { position: absolute; width: 0; height: 0; }
.desktop { display: flex; min-height: 100vh; font: 11px/14px "DejaVu Sans Condensed", "DejaVu Sans", sans-serif; color: #111; }
.window { position: relative; flex: 1; min-width: 0; display: flex; flex-direction: column; background: #d4d0c8; }
.icon { width: 16px; height: 16px; flex: none; display: block; overflow: visible; }
.caret { width: 5px; height: 3px; flex: none; vertical-align: middle; }
a { color: inherit; text-decoration: none; }
.plain { font: inherit; color: inherit; background: none; border: 0; padding: 0; white-space: nowrap; }

.titlebar { display: flex; align-items: center; gap: 2px; height: 18px; padding: 0 2px; background: linear-gradient(90deg, #0a246a, #a6caf0); color: #fff; }
.title { flex: 1; font: bold 12px/16px "Liberation Sans", Arial, sans-serif; white-space: nowrap; overflow: hidden; }
.win-buttons { display: flex; gap: 1px; }
.win-button { width: 16px; height: 14px; padding: 0; border: 1px solid; border-color: #fff #404040 #404040 #fff; background: #d4d0c8; display: flex; align-items: center; justify-content: center; }
.win-button svg { width: 12px; height: 10px; }
.w-min, .w-close { margin-left: 3px; }

.netmeter { position: absolute; top: 1px; right: 90px; width: 106px; height: 40px; padding: 3px; display: grid; grid-template-columns: 10px 34px 1fr; grid-template-rows: 14px 14px; gap: 2px; background: #a6caf0; border: 2px outset #d4d0c8; }
.net-peak { font-size: 8px; line-height: 10px; writing-mode: vertical-rl; transform: rotate(180deg); color: #345; }
.net-graph { grid-column: 2 / 4; width: 100%; height: 14px; background: #c8eef4; border: 1px solid #8ab; }
.net-value { display: flex; align-items: center; gap: 6px; padding: 0 3px; background: #dcf6f4; border: 1px solid #8ab; font-size: 10px; line-height: 12px; }
.net-value svg { width: 8px; height: 10px; }
.down { grid-column: 1 / 3; color: #a03434; }
.up { color: #1c7a34; }

.menubar { display: flex; align-items: center; gap: 14px; height: 22px; padding: 2px 7px 0; }

.tabstrip { display: flex; height: 26px; border-bottom: 1px solid #8c8984; }
.tab { flex: 1 1 0; min-width: 0; display: flex; align-items: center; gap: 1px; padding: 3px 4px 0 4px; margin-bottom: 1px; background: linear-gradient(#c9c5bf, #b8b4ad); border: 1px solid #8c8984; border-left-color: #f0eeea; border-radius: 3px 3px 0 0; }
.tab.current { background: linear-gradient(#f4f3f1, #ebe9e5); border-bottom: 0; margin-bottom: 0; }
.tab-label { flex: 1; white-space: nowrap; overflow: hidden; }
.tab-close { color: #908d88; }
.current .tab-close { color: #555; }
.tab-close svg { width: 8px; height: 8px; display: block; }
.tab-list { width: 21px; }
.tab-list svg { width: 8px; height: 5px; }

.navbar { display: flex; align-items: center; gap: 7px; height: 26px; background: linear-gradient(#ebe9e5, #d4d0c8); }
.nav-buttons { display: flex; gap: 10px; padding: 0 1px 0 5px; color: #4a525c; }
.nav-buttons .spaced { margin-left: 14px; }
.nav-buttons .far { margin-left: 30px; }
.nav-buttons .faded { color: #a5a5a2; }
.urlbar, .searchbar { display: flex; align-items: center; height: 24px; background: #fff; border: 1px solid #8c8984; border-radius: 3px; }
.urlbar { flex: 1; min-width: 0; gap: 6px; padding-right: 5px; }
.site { height: 22px; padding: 3px 5px 0 5px; border-right: 1px solid #ddd; background: #f4f3f1; }
.url { flex: 1; color: #777; white-space: nowrap; overflow: hidden; }
.url b { font-weight: normal; color: #111; }
.tri { width: 10px; height: 8px; }
.searchbar { width: 352px; gap: 4px; padding: 0 3px; }
.searchbar input { flex: 1; min-width: 0; border: 0; padding: 0 3px; font: inherit; background: none; outline: none; }
.searchbar input::placeholder { color: #777; opacity: 1; }
.addons { display: flex; gap: 12px; }
.addon { display: flex; align-items: center; gap: 3px; }
.addon:last-child { gap: 0; margin-left: -4px; }

.bookmarks { display: flex; align-items: center; height: 24px; padding: 0 8px 0 4px; }
.bookmark-list { flex: 1; min-width: 0; display: flex; justify-content: space-between; }
.tool { display: flex; align-items: center; gap: 4px; white-space: nowrap; }
.more { width: 64px; text-align: right; }

.devbar { display: flex; align-items: center; justify-content: space-between; height: 24px; padding: 0 4px; border-bottom: 1px solid #77746e; }
.dev-list { flex: 0 1 1013px; display: flex; justify-content: space-between; }
.dev-state { display: flex; gap: 8px; }

.page { position: relative; flex: 1; background: #fff; font: 13px/18px "Liberation Sans", Arial, sans-serif; color: #333; }
.sitebar { display: flex; align-items: center; height: 24px; padding: 0 4px; background: #444; color: #fff; font-size: 11px; }
.site-nav { flex: 1; display: flex; gap: 8px; }
.site-nav a, .logout { display: flex; align-items: center; gap: 5px; }
.logout { margin-left: 15px; }
.site-search { display: flex; align-items: flex-start; gap: 3px; height: 22px; }
.select-box { display: flex; align-items: center; height: 27px; padding: 0 4px 0 8px; background: #fff; border: 1px solid #bbb; }
.select-box select { width: 48px; appearance: none; border: 0; padding: 0; background: none; font: 10px/14px "Liberation Sans", Arial, sans-serif; color: #555; }
.select-arrow { width: 16px; height: 18px; background: #d4d0c8; border: 1px solid; border-color: #fff #404040 #404040 #fff; }
.site-search input { width: 78px; height: 18px; margin-top: 4px; border: 1px solid #ccc; border-radius: 2px; background: #fff; }
.ok { width: 31px; height: 17px; margin: 10px 0 0 2px; padding: 0; font: 11px/14px "Liberation Sans", Arial, sans-serif; background: #d4d0c8; color: #222; border: 1px solid; border-color: #fff #404040 #404040 #fff; }

h1 { margin: 0; padding: 16px 13px 23px; border-bottom: 1px solid #777; font-size: 19px; line-height: 22px; color: #000; }
.logo { position: absolute; top: 38px; right: 308px; width: 228px; height: 96px; overflow: visible; }
.logo-text { font: bold 26px "DejaVu Sans", sans-serif; stroke-width: 1px; }
.logo-text.wide { font-size: 28px; }
.logo-state { font: italic bold 25px "Liberation Sans", Arial, sans-serif; }

main { padding: 10px 13px 0; }
.help { min-height: 93px; padding: 16px 8px 12px; background: #dcecfc; border: 1px solid #b4c8d8; color: #000; }
.hide-help { float: right; display: flex; align-items: center; gap: 10px; margin-right: 514px; font-size: 10px; line-height: 14px; color: #4a6078; margin-top: -8px; }
.help h2 { margin: 0 0 8px; font-size: 15px; line-height: 18px; }
.help p { margin: 0; }
.sorting { margin: 7px 0 8px; font-size: 11px; color: #777; }
.sorting a, .sections a, .areas a { color: #0f85cc; }
.sections { display: flex; gap: 2px; border-bottom: 1px solid #ccc; }
.sections a { padding: 8px 12px 6px; border: 1px solid transparent; border-bottom: 0; }
.sections a.active { color: #555; border: 1px dotted #222; }
.areas { width: 876px; max-width: 100%; margin-top: 18px; border-collapse: separate; border-spacing: 0; table-layout: fixed; font-size: 14px; }
.areas th { height: 24px; padding: 0; border-bottom: 1px solid #000; }
.areas td { height: 35px; padding: 0 0 0 4px; }
.areas .c-member { width: 34px; padding: 4px 0 0 7px; vertical-align: top; }
.areas .c-bar { width: 116px; padding: 8px 13px 0 3px; vertical-align: top; }
.areas th.c-num { width: 70px; padding-left: 34px; }
.areas td.c-num { padding-left: 20px; text-align: center; }
.bar { height: 11px; background: #ddd; }
.bar-direct { height: 11px; background: #444; }
.legend { display: flex; flex-wrap: wrap; gap: 12px; margin-top: 18px; padding-left: 7px; }
.legend span { display: flex; align-items: center; gap: 4px; }
.legend.bars { margin-top: 17px; }
.legend.bars span { gap: 8px; }
.swatch { width: 25px; height: 9px; margin-bottom: 3px; }
.direct { background: #444; }
.delegated { background: #777; }
.none { background: #ddd; }
.trace { position: absolute; top: 634px; right: 0; width: 43px; height: 30px; padding: 0; background: #ffddbb; border: 1px solid #444; font: 10px/14px "Liberation Sans", Arial, sans-serif; color: #444; }

.statusbar { display: flex; align-items: stretch; gap: 3px; height: 24px; padding: 0 9px 3px 0; border-top: 1px solid #a5a29c; box-shadow: inset 0 -2px #d4d0c8, inset 0 -3px #fff; }
.panel { padding: 3px 12px 0 9px; border: 1px solid; border-color: #808080 #fff #fff #808080; white-space: nowrap; }
.panel:first-child, .panel:nth-child(4) { padding-right: 20px; }
.status-right { flex: 1; display: flex; justify-content: flex-end; align-items: center; gap: 9px; padding-right: 28px; }
.status-right span { display: flex; align-items: center; gap: 5px; white-space: nowrap; }
.fox { width: 25px; padding: 0 3px; border: 1px solid; border-color: #808080 #fff #fff #808080; background: #e4e1dc; }

.edge { width: 4px; display: flex; flex-direction: column; border-left: 1px solid #808080; }
.edge-top { height: 116px; background: #e4e1dc; }
.edge-middle { flex: 1; background: #fff; }
.edge-bottom { height: 76px; background: #d4d0c8; }
</style>
